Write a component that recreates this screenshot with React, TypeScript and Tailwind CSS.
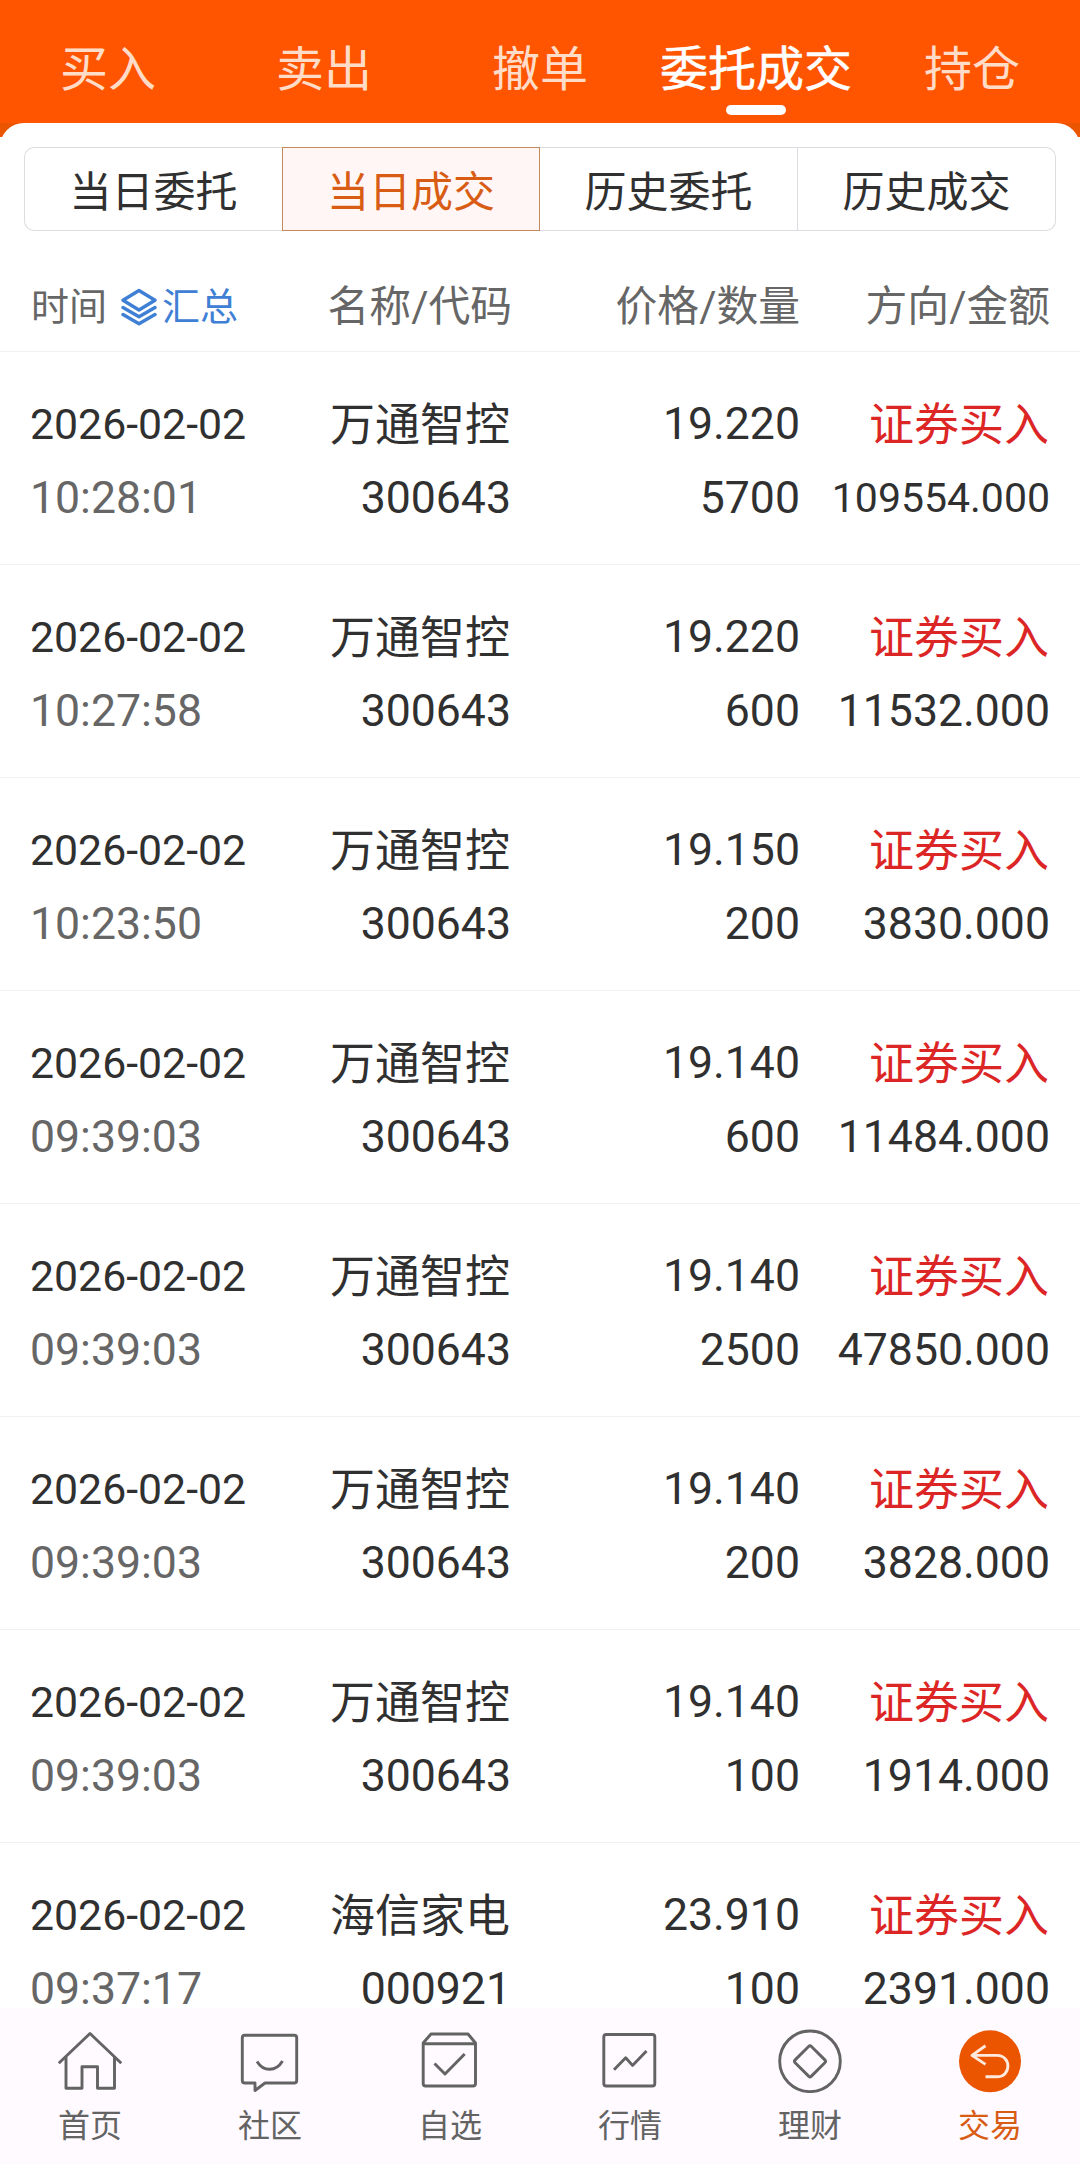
import React from 'react';
import clsx from 'clsx';

interface Trade {
  date: string;
  time: string;
  name: string;
  code: string;
  price: string;
  quantity: string;
  side: string;
  amount: string;
}

const topTabs = ['买入', '卖出', '撤单', '委托成交', '持仓'];
const segments = ['当日委托', '当日成交', '历史委托', '历史成交'];

const trades: Trade[] = [
  { date: '2026-02-02', time: '10:28:01', name: '万通智控', code: '300643', price: '19.220', quantity: '5700', side: '证券买入', amount: '109554.000' },
  { date: '2026-02-02', time: '10:27:58', name: '万通智控', code: '300643', price: '19.220', quantity: '600', side: '证券买入', amount: '11532.000' },
  { date: '2026-02-02', time: '10:23:50', name: '万通智控', code: '300643', price: '19.150', quantity: '200', side: '证券买入', amount: '3830.000' },
  { date: '2026-02-02', time: '09:39:03', name: '万通智控', code: '300643', price: '19.140', quantity: '600', side: '证券买入', amount: '11484.000' },
  { date: '2026-02-02', time: '09:39:03', name: '万通智控', code: '300643', price: '19.140', quantity: '2500', side: '证券买入', amount: '47850.000' },
  { date: '2026-02-02', time: '09:39:03', name: '万通智控', code: '300643', price: '19.140', quantity: '200', side: '证券买入', amount: '3828.000' },
  { date: '2026-02-02', time: '09:39:03', name: '万通智控', code: '300643', price: '19.140', quantity: '100', side: '证券买入', amount: '1914.000' },
  { date: '2026-02-02', time: '09:37:17', name: '海信家电', code: '000921', price: '23.910', quantity: '100', side: '证券买入', amount: '2391.000' },
];

const navItems: { label: string; icon: React.ReactNode }[] = [
  {
    label: '首页',
    icon: (
      <>
        <path d="M.7 34.300 32 4.500l31.300 29.800" />
        <path d="M8 28v31.200h16V37.700h15.500v21.500H56.500V28" />
      </>
    ),
  },
  {
    label: '社区',
    icon: (
      <>
        <path d="M7 6.300h49.200q2.500 0 2.500 2.500v42.700q0 2.500-2.500 2.500H27l-10 7.500V54H6.800q-2.500 0-2.500-2.500V8.800q0-2.500 2.500-2.500z" />
        <path d="M19 32.500c6.500 10.500 19 10.500 25.500-.5" />
      </>
    ),
  },
  {
    label: '自选',
    icon: (
      <>
        <path d="M5.200 14v40.500q0 2.500 2.500 2.500h47.300q2.500 0 2.500-2.500V14L50 5H13z" />
        <path d="M5.200 14.700h52.300" />
        <path d="M16.500 34.500l10.500 10.500L46.700 25" />
      </>
    ),
  },
  {
    label: '行情',
    icon: (
      <>
        <rect x="5.800" y="5.500" width="51" height="51.500" rx="2.500" />
        <path d="M16 40.800l11.700-12L34.500 36.400l14-14.400" />
      </>
    ),
  },
  {
    label: '理财',
    icon: (
      <>
        <circle cx="32" cy="32.300" r="30.300" />
        <rect x="20.500" y="20.800" width="23" height="23" rx="2" transform="rotate(45 32 32.300)" />
      </>
    ),
  },
  {
    label: '交易',
    icon: (
      <>
        <circle cx="32" cy="32.300" r="31" fill="#eb5500" stroke="none" />
        <path d="M27.500 16.800 14 26.400l13.500 9M14 26.400h25c14.500 0 14.500 21.400 0 21.400H27.500" stroke="#ffe9dc" />
      </>
    ),
  },
];

const SummaryIcon: React.FC = () => (
  <svg className="w-[36px] h-[38px]" viewBox="0 0 36 38" fill="none" stroke="#3f80d4" strokeWidth="3.400" strokeLinejoin="round" strokeLinecap="round">
    <path d="M18 2.500 34 12.200 18 22 2 12.200z" />
    <path d="M2 19.500l16 9.200 16-9.200" />
    <path d="M2 26.500l16 9.200 16-9.200" />
  </svg>
);

const TopTabs: React.FC = () => (
  <div className="grid grid-cols-5 h-[124px] pt-[34px] bg-[#ff5500]">
    {topTabs.map((tab) => {
      const active = tab === '委托成交';
      return (
        <div key={tab} className="flex flex-col items-center">
          <span className={clsx('text-[48px] leading-[71px]', active ? 'text-white [-webkit-text-stroke:0.5px_white]' : 'text-[#ffdcc8]')}>{tab}</span>
          {active && <span className="w-[60px] h-[10px] rounded-full bg-white" />}
        </div>
      );
    })}
  </div>
);

const Segments: React.FC = () => (
  <div className="grid grid-cols-4 h-[84px] mx-[24px]">
    {segments.map((label, i) => (
      <div
        key={label}
        className={clsx(
          'flex items-center justify-center pt-[7px] border text-[42px] leading-none',
          i === 1 ? 'border-[#c58a5c] bg-[#fff6f5] text-[#d85c14]' : 'border-[#dcdce0] text-[#303030]',
          i === 0 && 'rounded-l-[10px] border-r-0',
          i === 2 && 'border-l-0',
          i === 3 && 'rounded-r-[10px] border-l-0',
        )}
      >
        {label}
      </div>
    ))}
  </div>
);

const TradeRow: React.FC<{ trade: Trade }> = ({ trade }) => (
  <div className="grid grid-cols-[240px_241px_289px_250px] shrink-0 h-[213px] last:h-[165px] pt-[52px] pl-[30px] border-b border-[#f1f1f1] last:border-b-0 text-[44.6px] leading-[40px] text-[#303030] whitespace-nowrap">
    <div className="flex flex-col gap-[34px]">
      <div className="text-[42.8px]">{trade.date}</div>
      <div className="text-[#666666]">{trade.time}</div>
    </div>
    <div className="flex flex-col gap-[34px] text-right">
      <div className="h-[40px] pt-[2px] pr-px text-[45px]">{trade.name}</div>
      <div>{trade.code}</div>
    </div>
    <div className="flex flex-col gap-[34px] text-right">
      <div>{trade.price}</div>
      <div>{trade.quantity}</div>
    </div>
    <div className="flex flex-col gap-[34px] text-right">
      <div className="h-[40px] pt-[2px] pr-px text-[45px] text-[#dc2626]">{trade.side}</div>
      {/* long amounts shrink to stay inside the column */}
      <div className={clsx(trade.amount.length > 9 && 'text-[41px]')}>{trade.amount}</div>
    </div>
  </div>
);

const BottomNav: React.FC = () => (
  <div className="grid grid-cols-6 h-[156px] shrink-0 pt-[21px] bg-[#fefaff]">
    {navItems.map((item) => {
      const active = item.label === '交易';
      return (
        <div key={item.label} className={clsx('flex flex-col items-center', active ? 'text-[#d85c14]' : 'text-[#636363]')}>
          <svg className="w-[64px] h-[64px]" viewBox="0 0 64 64" fill="none" stroke="currentColor" strokeWidth="2.900" strokeLinejoin="round">
            {item.icon}
          </svg>
          <span className="mt-[9px] text-[32px] leading-[48px]">{item.label}</span>
        </div>
      );
    })}
  </div>
);

const App: React.FC = () => {
  return (
    <div className="flex flex-col w-[1080px] h-[2164px] overflow-hidden bg-white font-[Roboto,'Noto_Sans_CJK_SC',sans-serif]">
      <TopTabs />
      <div className="bg-[linear-gradient(#eb5500_14px,#ffffff_14px)]">
        <div className="h-[229px] pt-[24px] rounded-t-[24px] border-b border-[#f1f1f1] bg-white">
          <Segments />
          <div className="grid grid-cols-[240px_241px_288px_250px] pl-[31px] pt-[40px] text-[41.8px] leading-[72px] text-[#666666] whitespace-nowrap">
            <div className="flex items-center text-[38px]">
              <span>时间</span>
              <span className="flex items-center ml-[14px] text-[#3f80d4]">
                <SummaryIcon />
                <span className="ml-[5px]">汇总</span>
              </span>
            </div>
            <div className="text-right">名称/代码</div>
            <div className="text-right">价格/数量</div>
            <div className="text-right">方向/金额</div>
          </div>
        </div>
      </div>
      <div className="flex flex-col">
        {trades.map((trade, i) => (
          <TradeRow key={i} trade={trade} />
        ))}
      </div>
      <BottomNav />
    </div>
  );
};

export default App;
